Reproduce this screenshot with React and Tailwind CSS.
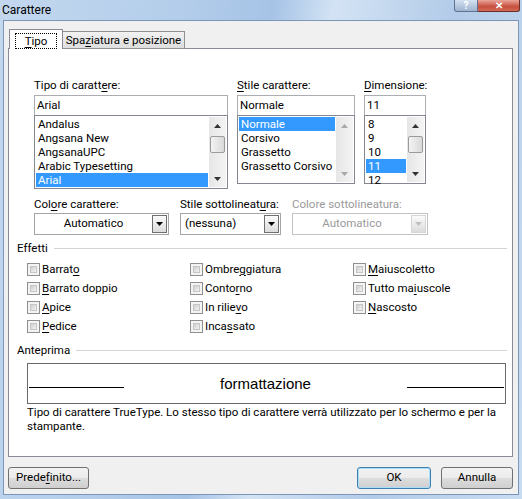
import React from 'react';

const ui = "font-['Roboto','Liberation_Sans',sans-serif] text-[11.5px] text-black";
const btn =
  'h-[22px] border rounded-[3px] flex items-center justify-center bg-[linear-gradient(to_bottom,#f2f2f2_0%,#ebebeb_50%,#dddddd_50%,#cfcfcf_100%)]';

function U({ children }) {
  return <span className="underline underline-offset-[2px]">{children}</span>;
}

function Arrow({ dir = 'down', color = '#000' }) {
  return (
    <svg width="7" height="4" viewBox="0 0 7 4">
      {dir === 'down' ? <path d="M0 0h7L3.5 4z" fill={color} /> : <path d="M0 4h7L3.5 0z" fill={color} />}
    </svg>
  );
}

function ScrollBar({ thumb, disabled }) {
  const c = disabled ? '#a8a8a8' : '#333';
  return (
    <div className="w-[17px] h-full flex flex-col bg-[linear-gradient(to_right,#e6e6e6,#f4f4f4)]">
      <div className="h-[17px] flex items-center justify-center">
        <Arrow dir="up" color={c} />
      </div>
      <div className="flex-1 px-[1px]">
        {thumb && (
          <div className="mt-[2px] h-[17px] border border-[#9b9b9b] rounded-[2px] bg-[linear-gradient(to_right,#f3f3f3,#d9d9d9)]" />
        )}
      </div>
      <div className="h-[17px] flex items-center justify-center">
        <Arrow color={c} />
      </div>
    </div>
  );
}

function ListBox({ items, selected, height, thumb, disabled }) {
  return (
    <div className={`-mt-px border border-[#828790] bg-white flex p-[1px] ${height}`}>
      <div className="flex-1 pr-[1px]">
        {items.map((it) => (
          <div
            key={it}
            className={`h-[14px] leading-[14px] pl-[2px] ${it === selected ? 'bg-[#3399ff] text-white' : ''}`}
          >
            {it}
          </div>
        ))}
      </div>
      <ScrollBar thumb={thumb} disabled={disabled} />
    </div>
  );
}

function Combo({ value, w, center, disabled }) {
  return (
    <div
      className={`${w} h-[22px] border ${disabled ? 'border-[#c3c3c3] text-[#9a9a9a]' : 'border-[#a5a5a5]'} bg-white flex items-center pr-[1px]`}
    >
      <div className={`flex-1 ${center ? 'text-center' : 'pl-[4px]'}`}>{value}</div>
      <div
        className={`w-[15px] h-[18px] border ${disabled ? 'border-[#d6d6d6]' : 'border-[#6f6f6f]'} flex items-center justify-center bg-[linear-gradient(to_bottom,#fafafa,#dcdcdc)]`}
      >
        <Arrow color={disabled ? '#c0c0c0' : '#000'} />
      </div>
    </div>
  );
}

function Check({ children }) {
  return (
    <div className="h-[19px] flex items-center">
      <div className="w-[13px] h-[13px] border border-[#8e8f8f] bg-[#f4f4f4] p-[2px]">
        <div className="w-full h-full border border-[#c6c6c6] bg-[linear-gradient(135deg,#cfcfcf,#f2f2f2)]" />
      </div>
      <span className="ml-[2px]">{children}</span>
    </div>
  );
}

function Group({ label }) {
  return (
    <div className="flex items-center h-[15px] pl-[8px] pr-[5px]">
      <span className="leading-[15px]">{label}</span>
      <div className="flex-1 ml-[6px] border-t border-[#d5d5d5]" />
    </div>
  );
}

export default function App() {
  return (
    <div
      className={`${ui} w-[522px] h-[499px] overflow-hidden bg-[linear-gradient(100deg,#c3d8ef_0%,#b3cdea_30%,#a6c3e6_45%,#d3e3f4_55%,#b2cbe8_75%,#c8dcf1_100%)]`}
    >
      {/* Title bar */}
      <div className="h-[20px] flex items-start">
        <div className="pl-[2px] pt-[2px] text-[12px] leading-[16px]">Carattere</div>
        <div className="ml-auto mr-[2px] flex">
          <div className="w-[24px] h-[12px] border border-[#5f7391] border-t-0 rounded-bl-[3px] bg-[linear-gradient(to_bottom,#d4e1f1,#9fb4cf)] flex items-center justify-center text-[10px] leading-[10px] font-bold text-white">
            ?
          </div>
          <div className="w-[42px] h-[12px] border border-[#6b2d27] border-t-0 border-l-0 rounded-br-[3px] bg-[linear-gradient(to_bottom,#e9a699,#c74f3f_60%,#d46a55)] flex items-center justify-center text-[10px] leading-[10px] font-bold text-white">
            ✕
          </div>
        </div>
      </div>

      {/* Body */}
      <div className="mx-[3px] h-[475px] border border-[#7b96b8] bg-[#f0f0f0]">
        {/* Tabs */}
        <div className="flex items-end h-[28px] pl-[5px]">
          <div className="relative z-10 w-[54px] h-[20px] border border-b-0 border-[#898c95] bg-white flex items-center justify-center">
            <div className="border border-dotted border-black px-[9px] h-[16px] leading-[14px] mt-[2px]">
              <U>T</U>ipo
            </div>
          </div>
          <div className="w-[122px] h-[18px] border border-l-0 border-[#919191] bg-[linear-gradient(to_bottom,#f2f2f2,#dedede)] flex items-center justify-center leading-[14px]">
            Spa<U>z</U>iatura e posizione
          </div>
        </div>

        {/* Panel */}
        <div className="-mt-px ml-[4px] w-[505px] h-[409px] border border-[#898c95] bg-white">
          <div className="pt-[29px] pl-[25px] flex items-start gap-[9px]">
            <div className="w-[194px]">
              <div className="h-[17px] leading-[15px]">
                Tipo di caratt<U>e</U>re:
              </div>
              <div className="h-[21px] border border-[#abadb3] pl-[2px] leading-[19px]">Arial</div>
              <ListBox
                items={['Andalus', 'Angsana New', 'AngsanaUPC', 'Arabic Typesetting', 'Arial']}
                selected="Arial"
                height="h-[74px]"
                thumb
              />
            </div>
            <div className="w-[118px]">
              <div className="h-[17px] leading-[15px]">
                <U>S</U>tile carattere:
              </div>
              <div className="h-[21px] border border-[#abadb3] pl-[2px] leading-[19px]">Normale</div>
              <ListBox
                items={['Normale', 'Corsivo', 'Grassetto', 'Grassetto Corsivo']}
                selected="Normale"
                height="h-[69px]"
                disabled
              />
            </div>
            <div className="w-[62px]">
              <div className="h-[17px] leading-[15px]">
                <U>D</U>imensione:
              </div>
              <div className="h-[21px] border border-[#abadb3] pl-[2px] leading-[19px]">11</div>
              <ListBox items={['8', '9', '10', '11', '12']} selected="11" height="h-[69px]" thumb />
            </div>
          </div>

          <div className="mt-[8px] pl-[25px] flex gap-[11px]">
            <div>
              <div className="h-[15px] leading-[15px] mb-[1px]">
                Col<U>o</U>re carattere:
              </div>
              <Combo value="Automatico" w="w-[135px]" center />
            </div>
            <div>
              <div className="h-[15px] leading-[15px] mb-[1px]">
                Stile sottolineat<U>u</U>ra:
              </div>
              <Combo value="(nessuna)" w="w-[101px]" />
            </div>
            <div>
              <div className="h-[15px] leading-[15px] mb-[1px] text-[#9a9a9a]">Colore sottolineatura:</div>
              <Combo value="Automatico" w="w-[136px]" center disabled />
            </div>
          </div>

          <div className="mt-[6px]">
            <Group label="Effetti" />
          </div>
          <div className="mt-[4px] pl-[18px] grid grid-cols-[163px_163px_163px]">
            <Check>
              Barrat<U>o</U>
            </Check>
            <Check>
              Ombre<U>g</U>giatura
            </Check>
            <Check>
              <U>M</U>aiuscoletto
            </Check>
            <Check>
              <U>B</U>arrato doppio
            </Check>
            <Check>
              Conto<U>r</U>no
            </Check>
            <Check>
              Tutto ma<U>i</U>uscole
            </Check>
            <Check>
              <U>A</U>pice
            </Check>
            <Check>
              In rilie<U>v</U>o
            </Check>
            <Check>
              <U>N</U>ascosto
            </Check>
            <Check>
              <U>P</U>edice
            </Check>
            <Check>
              Inca<U>s</U>sato
            </Check>
          </div>

          <div className="mt-[7px]">
            <Group label="Anteprima" />
          </div>
          <div className="mt-[5px] ml-[18px] w-[479px] h-[41px] border border-[#6a6a6a] flex items-end pb-[15px] px-[1px]">
            <div className="w-[95px] border-b border-black" />
            <div className="flex-1 text-center font-['Liberation_Sans',Arial,sans-serif] text-[15px] leading-[17px] -mb-[4px]">
              formattazione
            </div>
            <div className="w-[97px] border-b border-black" />
          </div>
          <div className="mt-[1px] ml-[18px] leading-[14px]">
            Tipo di carattere TrueType. Lo stesso tipo di carattere verrà utilizzato per lo schermo e per la
            <br />
            stampante.
          </div>
        </div>

        {/* Buttons */}
        <div className="mt-[10px] flex">
          <div className={`${btn} ml-[4px] w-[81px] border-[#707070]`}>
            Prede<U>f</U>inito...
          </div>
          <div className={`${btn} ml-[268px] w-[74px] border-[#3c7fb1] shadow-[inset_0_0_0_1px_#a8def7]`}>OK</div>
          <div className={`${btn} ml-[10px] w-[72px] border-[#707070]`}>Annulla</div>
        </div>
      </div>
    </div>
  );
}
